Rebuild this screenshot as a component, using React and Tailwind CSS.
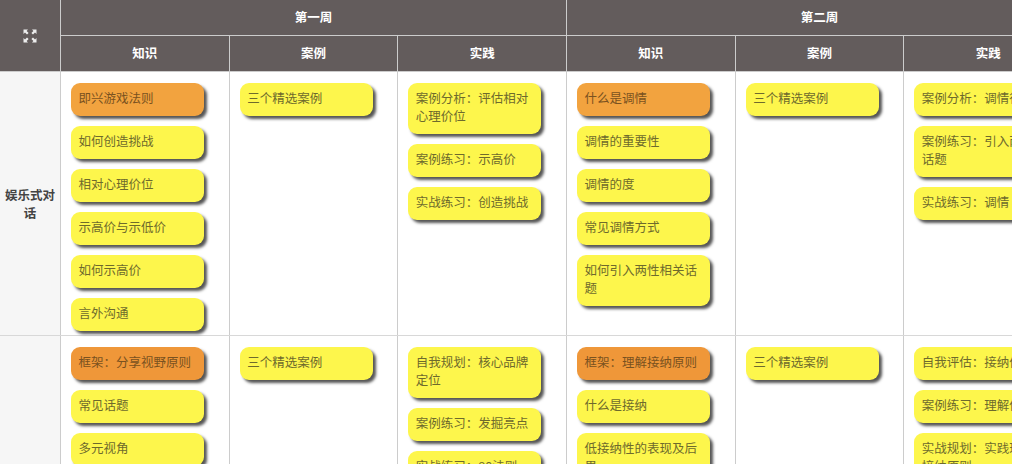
const weeks = ["第一周", "第二周"];
const heads = ["知识", "案例", "实践", "知识", "案例", "实践"];

// full-width colon, the labels below use it after the prefix
const C = "\uFF1A";

const rows = [
  {
    label: "娱乐式对话",
    height: "h-[264px]",
    orange: "bg-[#f2a33f] text-[#7a5220]",
    cols: [
      [["即兴游戏法则", true], ["如何创造挑战"], ["相对心理价位"], ["示高价与示低价"], ["如何示高价"], ["言外沟通"]],
      [["三个精选案例"]],
      [[`案例分析${C}评估相对心理价位`], [`案例练习${C}示高价`], [`实战练习${C}创造挑战`]],
      [["什么是调情", true], ["调情的重要性"], ["调情的度"], ["常见调情方式"], ["如何引入两性相关话题"]],
      [["三个精选案例"]],
      [[`案例分析${C}调情行为`], [`案例练习${C}引入两性话题`], [`实战练习${C}调情`]],
    ],
  },
  {
    label: "",
    height: "h-[200px]",
    orange: "bg-[#ef9739] text-[#7a5220]",
    cols: [
      [[`框架${C}分享视野原则`, true], ["常见话题"], ["多元视角"]],
      [["三个精选案例"]],
      [[`自我规划${C}核心品牌定位`], [`案例练习${C}发掘亮点`], [`实战练习${C}80法则`]],
      [[`框架${C}理解接纳原则`, true], ["什么是接纳"], ["低接纳性的表现及后果"]],
      [["三个精选案例"]],
      [[`自我评估${C}接纳体验`], [`案例练习${C}理解他人`], [`实战规划${C}实践理解接纳原则`]],
    ],
  },
];

function Card({ text, colors }) {
  return (
    <div
      className={`w-[133px] rounded-[9px] pt-[7px] pr-1 pb-[8px] pl-[7.5px] text-[12.5px] leading-[18px] shadow-[3px_3px_3px_#555] ${colors}`}
    >
      {text}
    </div>
  );
}

function ExpandIcon() {
  return (
    <svg width="14" height="14" viewBox="0 0 14 14" fill="#eeeeee">
      <path d="M0.5 0.5h4.5L3.6 2 5.6 4 4 5.6 2 3.6 0.5 5z" />
      <path d="M13.5 0.5v4.5L12 3.6 10 5.6 8.4 4 10.4 2 9 0.5z" />
      <path d="M0.5 13.5V9L2 10.4 4 8.4 5.6 10 3.6 12 5 13.5z" />
      <path d="M13.5 13.5H9L10.4 12 8.4 10 10 8.4 12 10.4 13.5 9z" />
    </svg>
  );
}

export default function App() {
  return (
    <div className="h-[464px] w-[1012px] overflow-hidden bg-white font-['Liberation_Sans','Noto_Sans_CJK_SC',sans-serif]">
      <div className="w-[1073px]">
        {/* Header */}
        <div className="grid h-[72px] grid-cols-[61px_1fr] bg-[#635c5c] text-[12.5px] font-bold text-white">
          <div className="flex items-center justify-center border-r border-b border-[#cccccc]">
            <ExpandIcon />
          </div>
          <div>
            <div className="grid h-[36px] grid-cols-2 border-b border-[#cccccc]">
              {weeks.map((w) => (
                <div key={w} className="flex items-center justify-center border-r border-[#cccccc] pt-0.5">
                  {w}
                </div>
              ))}
            </div>
            <div className="grid h-[36px] grid-cols-6 border-b border-[#cccccc]">
              {heads.map((h, i) => (
                <div key={i} className="flex items-center justify-center border-r border-[#cccccc] pt-0.5">
                  {h}
                </div>
              ))}
            </div>
          </div>
        </div>

        {/* Body */}
        {rows.map((row, r) => (
          <div key={r} className={`grid grid-cols-[61px_1fr] border-b border-[#d8d8d8] ${row.height}`}>
            <div className="flex items-center justify-center border-r border-[#cccccc] bg-[#f6f6f6] px-1 pt-0.5 text-center text-[12.5px] leading-[18px] font-bold text-[#444444]">
              {row.label}
            </div>
            <div className="grid grid-cols-6">
              {row.cols.map((cards, c) => (
                <div key={c} className="flex flex-col gap-2.5 border-r border-[#cccccc] pt-[11px] pl-2.5">
                  {cards.map(([text, orange], i) => (
                    <Card key={i} text={text} colors={orange ? row.orange : "bg-[#fdf64c] text-[#6e6a2c]"} />
                  ))}
                </div>
              ))}
            </div>
          </div>
        ))}
      </div>
    </div>
  );
}
